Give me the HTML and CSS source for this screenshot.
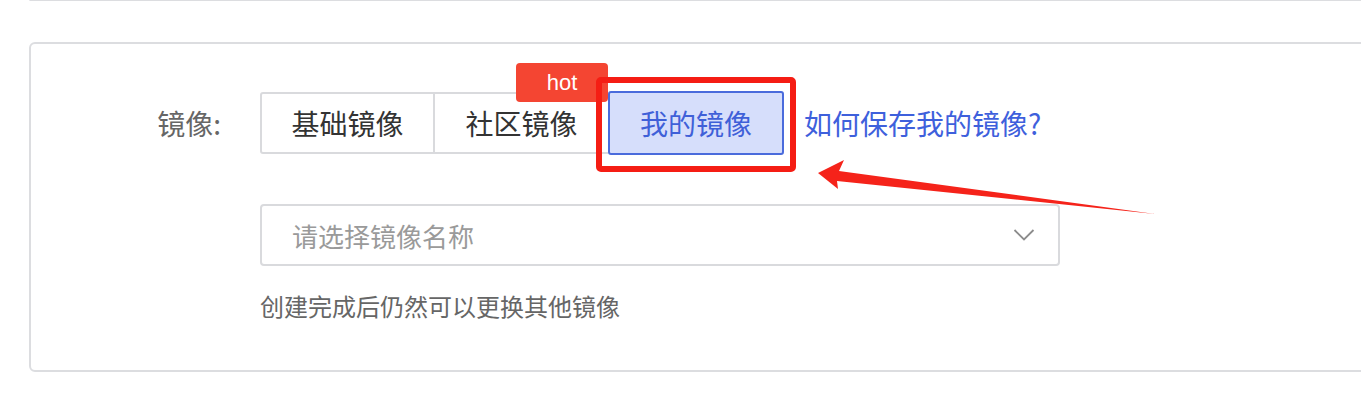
FILE: index.html
```html
<!DOCTYPE html>
<html lang="zh-CN">
<head>
<meta charset="utf-8">
<title>镜像</title>
<link rel="stylesheet" href="styles.css">
</head>
<body>
<div class="prev-card"></div>
<section class="card">
  <div class="form-item">
    <div class="label">镜像:</div>
    <div class="tabs">
      <div class="tab tab-first">基础镜像</div>
      <div class="tab tab-mid">社区镜像<span class="hot">hot</span></div>
      <div class="tab tab-active">我的镜像<span class="mark"></span></div>
    </div>
    <a class="link">如何保存我的镜像?</a>
  </div>
  <div class="select-row">
    <div class="select">
      <span class="placeholder">请选择镜像名称</span>
      <svg class="chevron" width="22" height="14" viewBox="0 0 22 14"><polyline points="1.5,2 11,11.5 20.5,2" fill="none" stroke="#8c8c8c" stroke-width="1.8"/></svg>
    </div>
  </div>
  <p class="hint">创建完成后仍然可以更换其他镜像</p>
</section>
<svg class="arrow" width="1361" height="403" viewBox="0 0 1361 403">
  <polygon points="818,173 844,160 839,171 1155,214 837,181 838,189" fill="#f5231a"/>
</svg>
</body>
</html>
```
FILE: styles.css
```css
html, body {
  margin: 0;
  padding: 0;
  overflow: hidden;
  background: #fff;
}
body {
  position: relative;
  width: 1361px;
  height: 403px;
  font-family: "Noto Sans CJK SC", "Noto Sans", sans-serif;
}
.prev-card {
  margin: -1px 0 0 29px;
  height: 0;
  width: 1345px;
  border: 2px solid #dcdde0;
  border-top: 0;
  border-radius: 0 0 6px 6px;
}
.card {
  box-sizing: border-box;
  margin: 41px 0 0 29px;
  width: 1345px;
  height: 330px;
  border: 2px solid #dcdde0;
  border-radius: 6px;
  padding-top: 48px;
}
.form-item {
  display: flex;
  align-items: center;
  height: 62px;
}
.label {
  width: 190px;
  margin-right: 39px;
  text-align: right;
  font-size: 28px;
  color: #666;
}
.tabs {
  display: flex;
}
.tab {
  box-sizing: border-box;
  position: relative;
  height: 62px;
  width: 175px;
  border: 2px solid #d9dadd;
  display: flex;
  align-items: center;
  justify-content: center;
  font-size: 28px;
  color: #333;
}
.tab-first {
  border-radius: 3px 0 0 3px;
}
.tab-mid {
  margin-left: -2px;
  border-right: 0;
  width: 175px;
}
.tab-active {
  width: 176px;
  height: 64px;
  margin-top: -1px;
  margin-bottom: -1px;
  border-color: #4a6bdc;
  background: #d6defb;
  color: #3f60d8;
  border-radius: 3px;
}
.hot {
  position: absolute;
  right: 0;
  top: -31px;
  width: 92px;
  height: 39px;
  border-radius: 4px;
  background: #f44532;
  color: #fff;
  font-family: "Liberation Sans", Arial, sans-serif;
  font-size: 22px;
  line-height: 39px;
  text-align: center;
}
.mark {
  position: absolute;
  left: -14px;
  right: -14px;
  top: -16px;
  bottom: -19px;
  border: 6px solid #f51d14;
  border-radius: 5px;
}
.link {
  margin-left: 20px;
  font-size: 28px;
  color: #3e60dc;
  text-decoration: none;
}
.select-row {
  margin-top: 50px;
  padding-left: 229px;
}
.select {
  box-sizing: border-box;
  width: 800px;
  height: 62px;
  border: 2px solid #d9dadd;
  border-radius: 4px;
  display: flex;
  align-items: center;
  justify-content: space-between;
  padding: 0 23px 0 30px;
}
.placeholder {
  font-size: 26px;
  color: #9a9a9a;
}
.hint {
  margin: 23px 0 0 229px;
  font-size: 24px;
  line-height: 34px;
  color: #666;
}
.arrow {
  position: absolute;
  left: 0;
  top: 0;
  pointer-events: none;
}
```
